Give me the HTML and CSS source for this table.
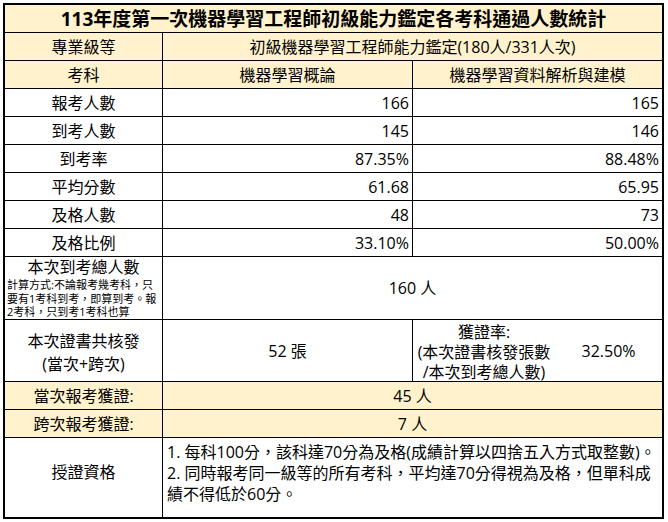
FILE: index.html
```html
<!DOCTYPE html>
<html lang="zh-Hant">
<head>
<meta charset="utf-8">
<title>113年度第一次機器學習工程師初級能力鑑定各考科通過人數統計</title>
<link rel="stylesheet" href="styles.css">
</head>
<body>
<div class="sheet">
  <div class="c cream title span2">113年度第一次機器學習工程師初級能力鑑定各考科通過人數統計</div>

  <div class="c cream">專業級等</div>
  <div class="c cream span1">初級機器學習工程師能力鑑定(180人/331人次)</div>

  <div class="c cream">考科</div>
  <div class="c cream">機器學習概論</div>
  <div class="c cream">機器學習資料解析與建模</div>

  <div class="c">報考人數</div>
  <div class="c num">166</div>
  <div class="c num">165</div>

  <div class="c">到考人數</div>
  <div class="c num">145</div>
  <div class="c num">146</div>

  <div class="c">到考率</div>
  <div class="c num">87.35%</div>
  <div class="c num">88.48%</div>

  <div class="c">平均分數</div>
  <div class="c num">61.68</div>
  <div class="c num">65.95</div>

  <div class="c">及格人數</div>
  <div class="c num">48</div>
  <div class="c num">73</div>

  <div class="c">及格比例</div>
  <div class="c num">33.10%</div>
  <div class="c num">50.00%</div>

  <div class="c total-label">
    <div class="big">本次到考總人數</div>
    <div class="note">計算方式:不論報考幾考科，只要有1考科到考，即算到考。報2考科，只到考1考科也算</div>
  </div>
  <div class="c span1">160 人</div>

  <div class="c cert-label">
    <div>本次證書共核發</div>
    <div>(當次+跨次)</div>
  </div>
  <div class="c">52 張</div>
  <div class="c rate">
    <div class="rate-text">
      <div>獲證率:</div>
      <div>(本次證書核發張數</div>
      <div>/本次到考總人數)</div>
    </div>
    <div class="rate-val">32.50%</div>
  </div>

  <div class="c cream">當次報考獲證:</div>
  <div class="c cream span1">45 人</div>

  <div class="c cream">跨次報考獲證:</div>
  <div class="c cream span1">7 人</div>

  <div class="c rules-label">授證資格</div>
  <div class="c span1 rules">
    <div>1. 每科100分，該科達70分為及格(成績計算以四捨五入方式取整數)。</div>
    <div>2. 同時報考同一級等的所有考科，平均達70分得視為及格，但單科成績不得低於60分。</div>
  </div>
</div>
</body>
</html>
```

FILE: styles.css
```css
html, body {
  margin: 0;
  padding: 0;
  background: #ffffff;
}

body {
  font-family: "Open Sans", "Noto Sans CJK TC", sans-serif;
  color: #000000;
  font-size: 16px;
}

.sheet {
  margin: 3px 0 0 3px;
  display: grid;
  grid-template-columns: 157px 249px 249px;
  grid-template-rows: repeat(9, 27px) 62px 61px 27px 27px 79px;
  gap: 1px;
  background: #000000;
  border: 2px solid #000000;
  width: 657px;
}

.c {
  background: #ffffff;
  display: flex;
  align-items: center;
  justify-content: center;
  line-height: 20px;
  overflow: hidden;
  white-space: nowrap;
}

.cream {
  background: #fff2cc;
}

.span2 {
  grid-column: 1 / span 3;
}

.span1 {
  grid-column: 2 / span 2;
}

.title {
  font-size: 19px;
  font-weight: 700;
}

.num {
  justify-content: flex-end;
  padding-right: 3px;
}

.total-label {
  flex-direction: column;
  justify-content: flex-start;
  align-items: stretch;
  white-space: normal;
}

.total-label .big {
  text-align: center;
  line-height: 20px;
}

.total-label .note {
  font-size: 11px;
  line-height: 13.5px;
  margin-top: 1px;
  padding: 0 2px;
}

.cert-label {
  flex-direction: column;
  line-height: 23px;
  padding-top: 4px;
}

.rate {
  justify-content: flex-start;
  align-items: stretch;
}

.rate-text {
  width: 142px;
  display: flex;
  flex-direction: column;
  justify-content: center;
  align-items: center;
  line-height: 20px;
  padding-top: 2px;
}

.rate-val {
  flex: 1;
  display: flex;
  align-items: center;
  justify-content: center;
}

.rules-label {
  padding-bottom: 12px;
}

.rules {
  flex-direction: column;
  align-items: stretch;
  justify-content: flex-start;
  white-space: normal;
  padding: 4px 2px 0 4px;
  line-height: 21px;
}
```
